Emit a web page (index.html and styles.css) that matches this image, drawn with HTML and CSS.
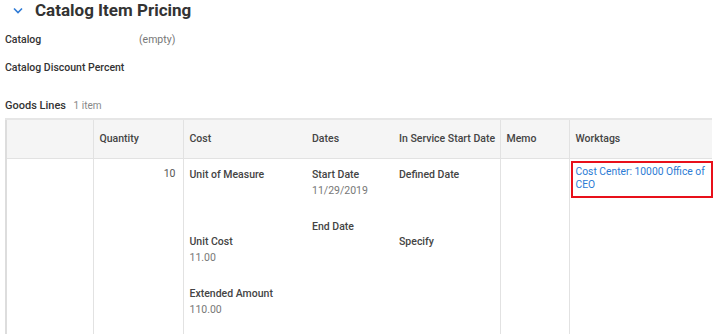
FILE: index.html
```html
<!DOCTYPE html>
<html lang="en">
<head>
    <meta charset="UTF-8">
    <title>Catalog Item Pricing</title>
    <link rel="stylesheet" href="styles.css">
</head>
<body>
    <div class="section-title">
        <svg class="chevron" width="10" height="7" viewBox="0 0 10 7">
            <path d="M1 1.5 L5 5.5 L9 1.5" fill="none" stroke="#2f7bd6" stroke-width="1.6"/>
        </svg>
        <h1>Catalog Item Pricing</h1>
    </div>

    <div class="field-row">
        <span class="field-label">Catalog</span>
        <span class="field-value">(empty)</span>
    </div>
    <div class="field-row">
        <span class="field-label">Catalog Discount Percent</span>
    </div>

    <div class="grid-title">
        <span class="grid-name">Goods Lines</span>
        <span class="grid-count">1 item</span>
    </div>

    <table class="grid">
        <thead>
            <tr>
                <th class="col-blank"></th>
                <th class="col-qty">Quantity</th>
                <th class="col-cost">Cost</th>
                <th class="col-dates joined">Dates</th>
                <th class="col-service joined">In Service Start Date</th>
                <th class="col-memo">Memo</th>
                <th class="col-tags">Worktags</th>
            </tr>
        </thead>
        <tbody>
            <tr>
                <td></td>
                <td class="num">10</td>
                <td>
                    <div class="item tall">
                        <div class="item-label">Unit of Measure</div>
                        <div class="item-value"></div>
                    </div>
                    <div class="item">
                        <div class="item-label">Unit Cost</div>
                        <div class="item-value">11.00</div>
                    </div>
                    <div class="item">
                        <div class="item-label">Extended Amount</div>
                        <div class="item-value">110.00</div>
                    </div>
                </td>
                <td class="joined">
                    <div class="item">
                        <div class="item-label">Start Date</div>
                        <div class="item-value">11/29/2019</div>
                    </div>
                    <div class="item">
                        <div class="item-label">End Date</div>
                        <div class="item-value"></div>
                    </div>
                </td>
                <td class="joined">
                    <div class="item tall">
                        <div class="item-label">Defined Date</div>
                        <div class="item-value"></div>
                    </div>
                    <div class="item">
                        <div class="item-label">Specify</div>
                    </div>
                </td>
                <td></td>
                <td class="tags">
                    <div class="highlight">
                        <a href="#">Cost Center: 10000 Office of CEO</a>
                    </div>
                </td>
            </tr>
        </tbody>
    </table>
</body>
</html>
```

FILE: styles.css
```css
body {
    margin: 0;
    padding: 0 5px;
    font-family: Roboto, "Noto Sans", sans-serif;
    font-size: 10.5px;
    color: #333;
    background: #fff;
}

.section-title {
    display: flex;
    align-items: center;
    height: 20px;
}

.chevron {
    margin: 0 12px 0 8px;
}

h1 {
    margin: 0;
    font-size: 17px;
    font-weight: 700;
    color: #333;
}

.field-row {
    display: flex;
    height: 16px;
    line-height: 16px;
    margin-top: 12px;
}

.field-row + .field-row {
    margin-top: 12px;
}

.field-label {
    width: 134px;
    font-weight: 500;
}

.field-value {
    color: #777;
}

.grid-title {
    margin-top: 22px;
    height: 16px;
    line-height: 16px;
}

.grid-name {
    font-weight: 500;
    font-size: 11px;
    margin-right: 5px;
}

.grid-count {
    color: #888;
    font-size: 10px;
}

.grid {
    width: 706px;
    border-collapse: collapse;
    table-layout: fixed;
    margin-top: 4px;
}

.grid th,
.grid td {
    box-sizing: border-box;
}

.grid th {
    height: 39px;
    padding: 0 6px;
    text-align: left;
    white-space: nowrap;
    font-weight: 500;
    color: #444;
    background: #f5f5f5;
    border-top: 2px solid #e6e6e6;
    border-bottom: 1px solid #e2e2e2;
    border-left: 1px solid #e2e2e2;
}

.grid td {
    height: 173px;
    padding: 8px 6px 0;
    vertical-align: top;
    border-left: 1px solid #e2e2e2;
    line-height: 16px;
}

.grid th:first-child,
.grid td:first-child {
    border-left: 2px solid #ddd;
}

.grid .joined {
    border-left: none;
}

.col-blank { width: 87px; }
.col-qty { width: 90px; }
.col-cost { width: 123px; }
.col-dates { width: 87px; }
.col-service { width: 107px; }
.col-memo { width: 69px; }
.col-tags { width: 143px; }

.grid td.num {
    text-align: right;
    padding-top: 7px;
    padding-right: 7px;
    color: #555;
}

.item {
    margin-bottom: 20px;
}

.item.tall {
    margin-bottom: 35px;
}

.item-label {
    font-weight: 500;
    color: #444;
}

.item-value {
    min-height: 16px;
    color: #777;
}

.grid td.tags {
    padding: 2px 0 0 1px;
}

.highlight {
    margin-right: -1px;
    border: 2px solid #e8101a;
    padding: 2px 2px 5px 3px;
    line-height: 13px;
    font-size: 10.3px;
}

.highlight a {
    color: #2c7bd4;
    text-decoration: none;
}
```
